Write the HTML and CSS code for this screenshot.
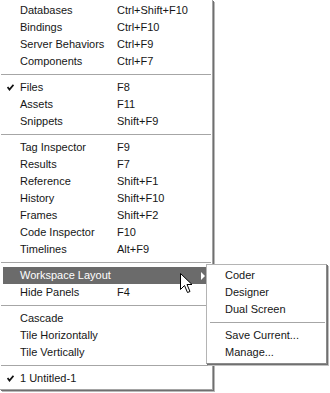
FILE: index.html
```html
<!DOCTYPE html>
<html lang="en">
<head>
    <meta charset="UTF-8">
    <title>Window menu</title>
    <link rel="stylesheet" href="styles.css">
</head>
<body>
    <div class="screen">
        <div class="menu main">
            <div class="item"><span class="mark"></span><span class="label">Databases</span><span class="key">Ctrl+Shift+F10</span></div>
            <div class="item"><span class="mark"></span><span class="label">Bindings</span><span class="key">Ctrl+F10</span></div>
            <div class="item"><span class="mark"></span><span class="label">Server Behaviors</span><span class="key">Ctrl+F9</span></div>
            <div class="item"><span class="mark"></span><span class="label">Components</span><span class="key">Ctrl+F7</span></div>
            <div class="sep"></div>
            <div class="item"><span class="mark"><svg class="check" width="7" height="7" viewBox="0 0 7 7"><path d="M0.5 3 L2.5 5.5 L6.5 0.8" /></svg></span><span class="label">Files</span><span class="key">F8</span></div>
            <div class="item"><span class="mark"></span><span class="label">Assets</span><span class="key">F11</span></div>
            <div class="item"><span class="mark"></span><span class="label">Snippets</span><span class="key">Shift+F9</span></div>
            <div class="sep"></div>
            <div class="item"><span class="mark"></span><span class="label">Tag Inspector</span><span class="key">F9</span></div>
            <div class="item"><span class="mark"></span><span class="label">Results</span><span class="key">F7</span></div>
            <div class="item"><span class="mark"></span><span class="label">Reference</span><span class="key">Shift+F1</span></div>
            <div class="item"><span class="mark"></span><span class="label">History</span><span class="key">Shift+F10</span></div>
            <div class="item"><span class="mark"></span><span class="label">Frames</span><span class="key">Shift+F2</span></div>
            <div class="item"><span class="mark"></span><span class="label">Code Inspector</span><span class="key">F10</span></div>
            <div class="item"><span class="mark"></span><span class="label">Timelines</span><span class="key">Alt+F9</span></div>
            <div class="sep"></div>
            <div class="item active"><span class="mark"></span><span class="label">Workspace Layout</span><span class="arrow"></span></div>
            <div class="item"><span class="mark"></span><span class="label">Hide Panels</span><span class="key">F4</span></div>
            <div class="sep"></div>
            <div class="item"><span class="mark"></span><span class="label">Cascade</span></div>
            <div class="item"><span class="mark"></span><span class="label">Tile Horizontally</span></div>
            <div class="item"><span class="mark"></span><span class="label">Tile Vertically</span></div>
            <div class="sep"></div>
            <div class="item"><span class="mark"><svg class="check" width="7" height="7" viewBox="0 0 7 7"><path d="M0.5 3 L2.5 5.5 L6.5 0.8" /></svg></span><span class="label">1 Untitled-1</span></div>
        </div>

        <div class="menu sub">
            <div class="item">Coder</div>
            <div class="item">Designer</div>
            <div class="item">Dual Screen</div>
            <div class="sep"></div>
            <div class="item">Save Current...</div>
            <div class="item">Manage...</div>
        </div>

        <svg class="cursor" width="13" height="22" viewBox="0 0 13 22">
            <path d="M0.5 0.5 L0.5 16.5 L4.5 12.5 L7.5 19.5 L10 18.5 L7 11.5 L12 11.5 Z" />
        </svg>
    </div>
</body>
</html>
```

FILE: styles.css
```css
* {
    margin: 0;
    padding: 0;
    box-sizing: border-box;
}

body {
    background: #fff;
    font-family: "Liberation Sans", Arial, sans-serif;
    font-size: 11px;
    color: #161616;
}

.screen {
    position: relative;
    width: 330px;
    height: 393px;
    overflow: hidden;
}

.menu {
    background: #fff;
}

/* main window menu */
.main {
    width: 213px;
    padding: 2px 3px 2px 3px;
    border-right: 1px solid #a4a4a4;
    border-bottom: 1px solid #a4a4a4;
    box-shadow: 1px 1px 0 #6f6f6f, 2px 2px 0 #b9b9b9;
}

.item {
    display: flex;
    align-items: center;
    height: 17px;
    line-height: 17px;
    white-space: nowrap;
}

.mark {
    width: 17px;
    height: 17px;
    display: flex;
    align-items: center;
    padding-left: 4px;
}

.check {
    display: block;
    margin-top: 0;
}

.check path {
    fill: none;
    stroke: #111;
    stroke-width: 1.8;
}

.label {
    width: 97px;
}

.item.active {
    background: #6b6b6b;
    color: #fff;
}

.item.active .label {
    width: auto;
}

.arrow {
    margin-left: auto;
    margin-right: 4px;
    width: 0;
    height: 0;
    border-left: 4px solid #fff;
    border-top: 4px solid transparent;
    border-bottom: 4px solid transparent;
}

.sep {
    height: 1px;
    margin: 4px -2px 4px -2px;
    background: #a6a6a6;
}

/* workspace layout submenu */
.sub {
    position: absolute;
    left: 206px;
    top: 264px;
    width: 121px;
    padding: 2px;
    border: 1px solid #b4b4b4;
    border-right-color: #8a8a8a;
    border-bottom-color: #8a8a8a;
    box-shadow: 1px 1px 0 #707070, 2px 2px 0 #c0c0c0;
}

.sub .item {
    padding-left: 16px;
}

.sub .sep {
    margin: 4px -1px 4px 1px;
}

.cursor {
    position: absolute;
    left: 180px;
    top: 273px;
}

.cursor path {
    fill: #fff;
    stroke: #000;
    stroke-width: 1;
}
```
